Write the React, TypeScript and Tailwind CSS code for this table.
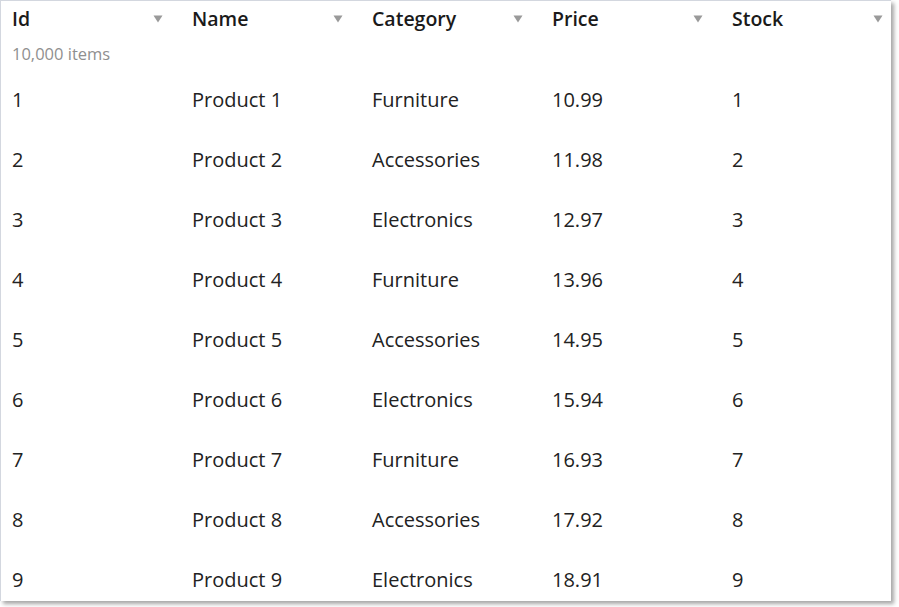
import React from 'react';

const columns = ['Id', 'Name', 'Category', 'Price', 'Stock'];
const categories = ['Furniture', 'Accessories', 'Electronics'];

const rows = Array.from({ length: 9 }, (_, i) => ({
  id: i + 1,
  name: `Product ${i + 1}`,
  category: categories[i % 3],
  price: (10.99 + i * 0.99).toFixed(2),
  stock: i + 1,
}));

const SortArrow = () => (
  <svg width="10" height="8" viewBox="0 0 10 8" className="shrink-0">
    <path d="M0.5 0.5 L9.5 0.5 L5 7.5 Z" fill="#9a9a9a" />
  </svg>
);

export default function App() {
  return (
    <div className="bg-white w-[899px] h-[607px]" style={{ fontFamily: '"Open Sans", "Noto Sans", sans-serif' }}>
      <div className="w-[891px] h-[601px] overflow-hidden border-l border-t border-[#d3d7df] bg-white shadow-[3px_3px_4px_rgba(0,0,0,0.35)]">
        <div className="grid grid-cols-[180px_180px_180px_180px_180px] h-[36px] items-center">
          {columns.map((c) => (
            <div key={c} className="flex items-center justify-between pl-[11px] pr-[18px]">
              <span className="text-[19.5px] font-semibold text-[#1a1a1a] leading-none -mt-[1px]">{c}</span>
              <SortArrow />
            </div>
          ))}
        </div>
        <div className="h-[34px] pl-[11px] pt-[5px] text-[16.5px] text-[#8f8f8f]">10,000 items</div>
        {rows.map((r) => (
          <div key={r.id} className="grid grid-cols-[180px_180px_180px_180px_180px] h-[60px] items-center text-[20px] text-[#222] leading-none -mt-[0px]">
            <div className="pl-[11px] -translate-y-[1px]">{r.id}</div>
            <div className="pl-[11px] -translate-y-[1px]">{r.name}</div>
            <div className="pl-[11px] -translate-y-[1px]">{r.category}</div>
            <div className="pl-[11px] -translate-y-[1px]">{r.price}</div>
            <div className="pl-[11px] -translate-y-[1px]">{r.stock}</div>
          </div>
        ))}
      </div>
    </div>
  );
}
